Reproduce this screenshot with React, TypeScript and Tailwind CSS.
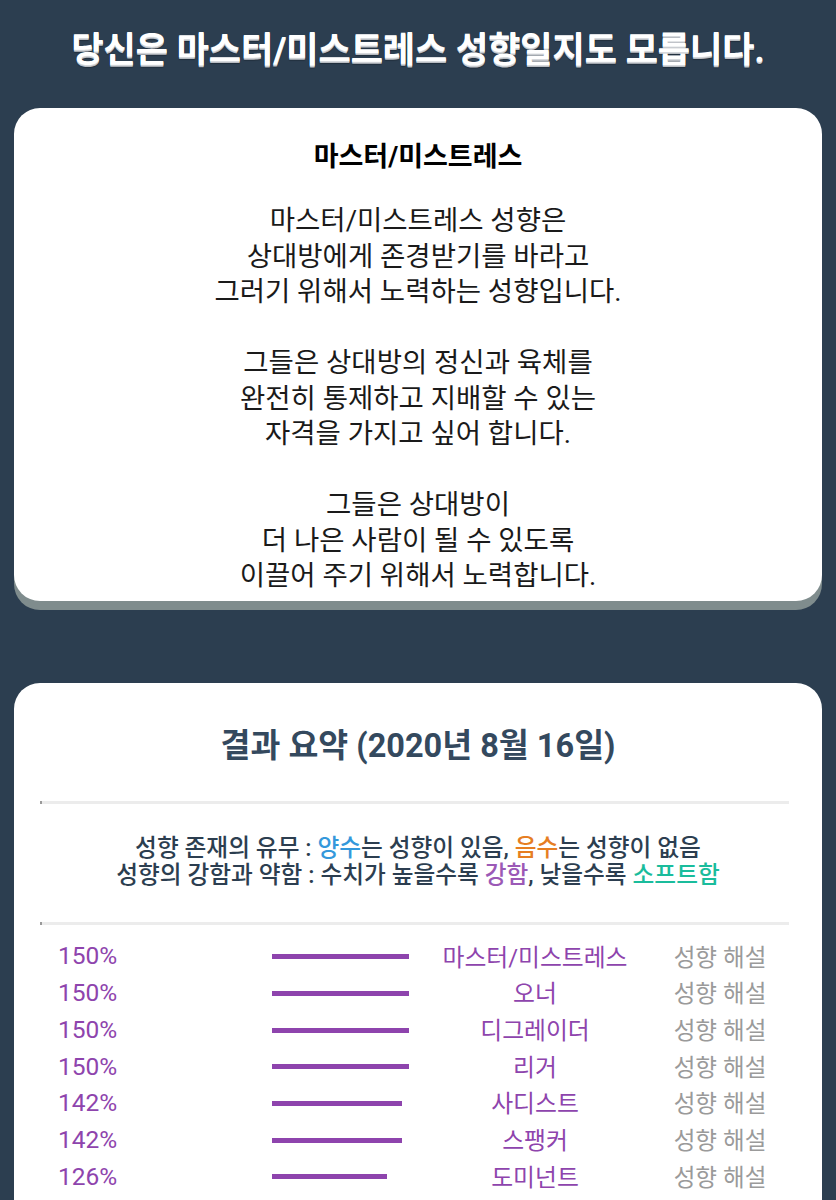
const FONT = "font-['Roboto','Noto_Sans_CJK_KR',sans-serif]";

const PARAGRAPHS = [
  ["마스터/미스트레스 성향은", "상대방에게 존경받기를 바라고", "그러기 위해서 노력하는 성향입니다."],
  ["그들은 상대방의 정신과 육체를", "완전히 통제하고 지배할 수 있는", "자격을 가지고 싶어 합니다."],
  ["그들은 상대방이", "더 나은 사람이 될 수 있도록", "이끌어 주기 위해서 노력합니다."],
];

const RESULTS = [
  { pct: 150, name: "마스터/미스트레스" },
  { pct: 150, name: "오너" },
  { pct: 150, name: "디그레이더" },
  { pct: 150, name: "리거" },
  { pct: 142, name: "사디스트" },
  { pct: 142, name: "스팽커" },
  { pct: 126, name: "도미넌트" },
];

function Rule() {
  return <div className="h-[3px] w-[749px] border-l-2 border-[#9a9a9a] bg-[#ececec]" />;
}

export default function App() {
  return (
    <div className={`min-h-[1200px] bg-[#2c3e50] px-[14px] pt-[31px] ${FONT}`}>
      <h1 className="text-center text-[35px] font-bold leading-[40px] text-white [text-shadow:0_1px_0_#d5d8dc,0_2px_0_#b8bcc2,0_3px_1px_rgba(0,0,0,0.25)]">
        당신은 마스터/미스트레스 성향일지도 모릅니다.
      </h1>

      <section className="mt-[37px] rounded-[26px] bg-white pt-[31px] pb-[7px] text-center [box-shadow:0_9px_0_0_#7f8c8d]">
        <h2 className="text-[27px] font-bold leading-[36px] text-black">마스터/미스트레스</h2>
        <div className="mt-[28px] text-[27.5px] leading-[35.5px] text-[#1a1a1a]">
          {PARAGRAPHS.map((p, i) => (
            <p key={i} className={i > 0 ? "mt-[35.5px]" : ""}>
              {p.map((line) => (
                <span key={line} className="block">
                  {line}
                </span>
              ))}
            </p>
          ))}
        </div>
      </section>

      <section className="mt-[82px] rounded-[26px] bg-white pt-[43px] pb-[60px]">
        <h2 className="text-center text-[32.5px] font-bold leading-[40px] text-[#34495e]">
          결과 요약 (2020년 8월 16일)
        </h2>

        <div className="mt-[35px] pl-[26px]">
          <Rule />
        </div>

        <div className="mt-[31px] text-center text-[23.7px] font-medium leading-[27px] text-[#2c3e50]">
          <p>
            성향 존재의 유무 : <span className="text-[#3498db]">양수</span>는 성향이 있음,{" "}
            <span className="text-[#e67e22]">음수</span>는 성향이 없음
          </p>
          <p>
            성향의 강함과 약함 : 수치가 높을수록 <span className="text-[#9b59b6]">강함</span>, 낮을수록{" "}
            <span className="text-[#1abc9c]">소프트함</span>
          </p>
        </div>

        <div className="mt-[33px] pl-[26px]">
          <Rule />
        </div>

        <div className="mt-[14px] pl-[44px]">
          {RESULTS.map((r, i) => (
            <div key={i} className="flex h-[36.7px] items-center">
              <div className="w-[214px] text-[24.5px] text-[#8e44ad]">{r.pct}%</div>
              <div className="w-[153px]">
                <div className="h-[5px] bg-[#8e44ad]" style={{ width: `${r.pct * 0.913}px` }} />
              </div>
              <div className="w-[220px] pt-[3px] text-center text-[23.8px] text-[#8e44ad]">{r.name}</div>
              <div className="w-[150px] pt-[3px] text-center text-[23.6px] text-[#9a9a9a]">성향 해설</div>
            </div>
          ))}
        </div>
      </section>
    </div>
  );
}
